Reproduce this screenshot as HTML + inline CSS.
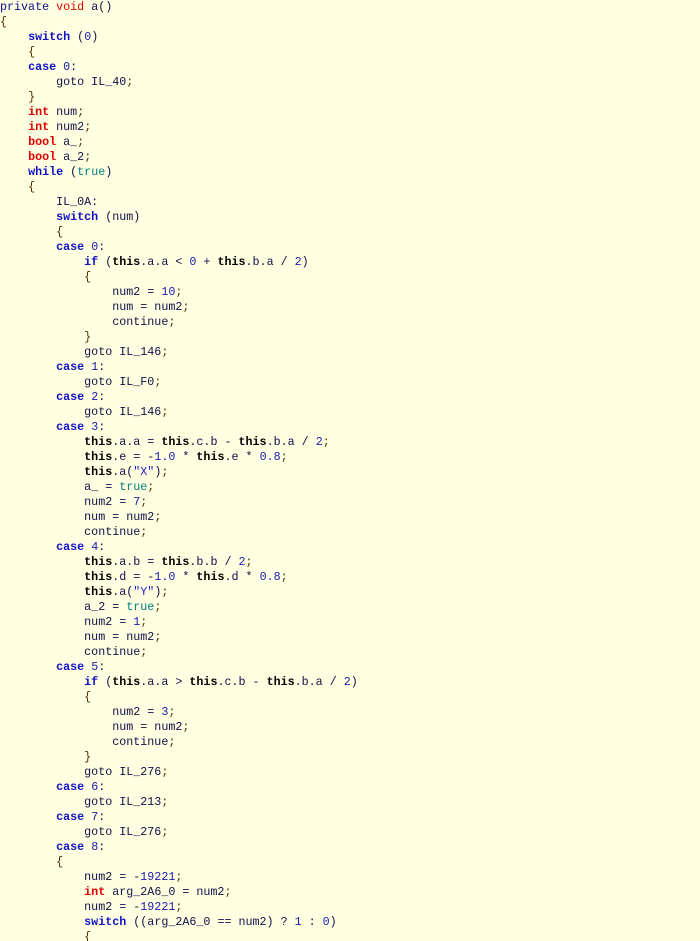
<!DOCTYPE html>
<html><head><meta charset="utf-8"><style>
html,body{margin:0;padding:0;background:#ffffe1;width:700px;height:941px;overflow:hidden}
pre{margin:0;padding:0;font-family:"Liberation Mono",monospace;font-size:11.7px;line-height:15px;color:#101048;position:relative;top:0px}
.k{color:#1010c8;font-weight:bold}
.p{color:#101090}
.v{color:#e00000}
.t{color:#e00000;font-weight:bold}
.n{color:#1a1ab0}
.s{color:#1a1ad0}
.b{color:#008080}
.h{color:#000;font-weight:bold}
.c{color:#101048}
.r{color:#503000}
</style></head><body><pre><span class="p">private</span> <span class="v">void</span> a()
<span class="r">{</span>
    <span class="k">switch</span> (<span class="n">0</span>)
    <span class="r">{</span>
    <span class="k">case</span> <span class="n">0</span>:
        goto IL_40<span class="r">;</span>
    <span class="r">}</span>
    <span class="t">int</span> num<span class="r">;</span>
    <span class="t">int</span> num2<span class="r">;</span>
    <span class="t">bool</span> a_<span class="r">;</span>
    <span class="t">bool</span> a_2<span class="r">;</span>
    <span class="k">while</span> (<span class="b">true</span>)
    <span class="r">{</span>
        IL_0A:
        <span class="k">switch</span> (num)
        <span class="r">{</span>
        <span class="k">case</span> <span class="n">0</span>:
            <span class="k">if</span> (<span class="h">this</span>.a.a &lt; <span class="n">0</span> + <span class="h">this</span>.b.a / <span class="n">2</span>)
            <span class="r">{</span>
                num2 = <span class="n">10</span><span class="r">;</span>
                num = num2<span class="r">;</span>
                continue<span class="r">;</span>
            <span class="r">}</span>
            goto IL_146<span class="r">;</span>
        <span class="k">case</span> <span class="n">1</span>:
            goto IL_F0<span class="r">;</span>
        <span class="k">case</span> <span class="n">2</span>:
            goto IL_146<span class="r">;</span>
        <span class="k">case</span> <span class="n">3</span>:
            <span class="h">this</span>.a.a = <span class="h">this</span>.c.b - <span class="h">this</span>.b.a / <span class="n">2</span><span class="r">;</span>
            <span class="h">this</span>.e = -<span class="n">1.0</span> * <span class="h">this</span>.e * <span class="n">0.8</span><span class="r">;</span>
            <span class="h">this</span>.a(<span class="s">"X"</span>)<span class="r">;</span>
            a_ = <span class="b">true</span><span class="r">;</span>
            num2 = <span class="n">7</span><span class="r">;</span>
            num = num2<span class="r">;</span>
            continue<span class="r">;</span>
        <span class="k">case</span> <span class="n">4</span>:
            <span class="h">this</span>.a.b = <span class="h">this</span>.b.b / <span class="n">2</span><span class="r">;</span>
            <span class="h">this</span>.d = -<span class="n">1.0</span> * <span class="h">this</span>.d * <span class="n">0.8</span><span class="r">;</span>
            <span class="h">this</span>.a(<span class="s">"Y"</span>)<span class="r">;</span>
            a_2 = <span class="b">true</span><span class="r">;</span>
            num2 = <span class="n">1</span><span class="r">;</span>
            num = num2<span class="r">;</span>
            continue<span class="r">;</span>
        <span class="k">case</span> <span class="n">5</span>:
            <span class="k">if</span> (<span class="h">this</span>.a.a &gt; <span class="h">this</span>.c.b - <span class="h">this</span>.b.a / <span class="n">2</span>)
            <span class="r">{</span>
                num2 = <span class="n">3</span><span class="r">;</span>
                num = num2<span class="r">;</span>
                continue<span class="r">;</span>
            <span class="r">}</span>
            goto IL_276<span class="r">;</span>
        <span class="k">case</span> <span class="n">6</span>:
            goto IL_213<span class="r">;</span>
        <span class="k">case</span> <span class="n">7</span>:
            goto IL_276<span class="r">;</span>
        <span class="k">case</span> <span class="n">8</span>:
        <span class="r">{</span>
            num2 = -<span class="n">19221</span><span class="r">;</span>
            <span class="t">int</span> arg_2A6_0 = num2<span class="r">;</span>
            num2 = -<span class="n">19221</span><span class="r">;</span>
            <span class="k">switch</span> ((arg_2A6_0 == num2) ? <span class="n">1</span> : <span class="n">0</span>)
            <span class="r">{</span>
</pre></body></html>
